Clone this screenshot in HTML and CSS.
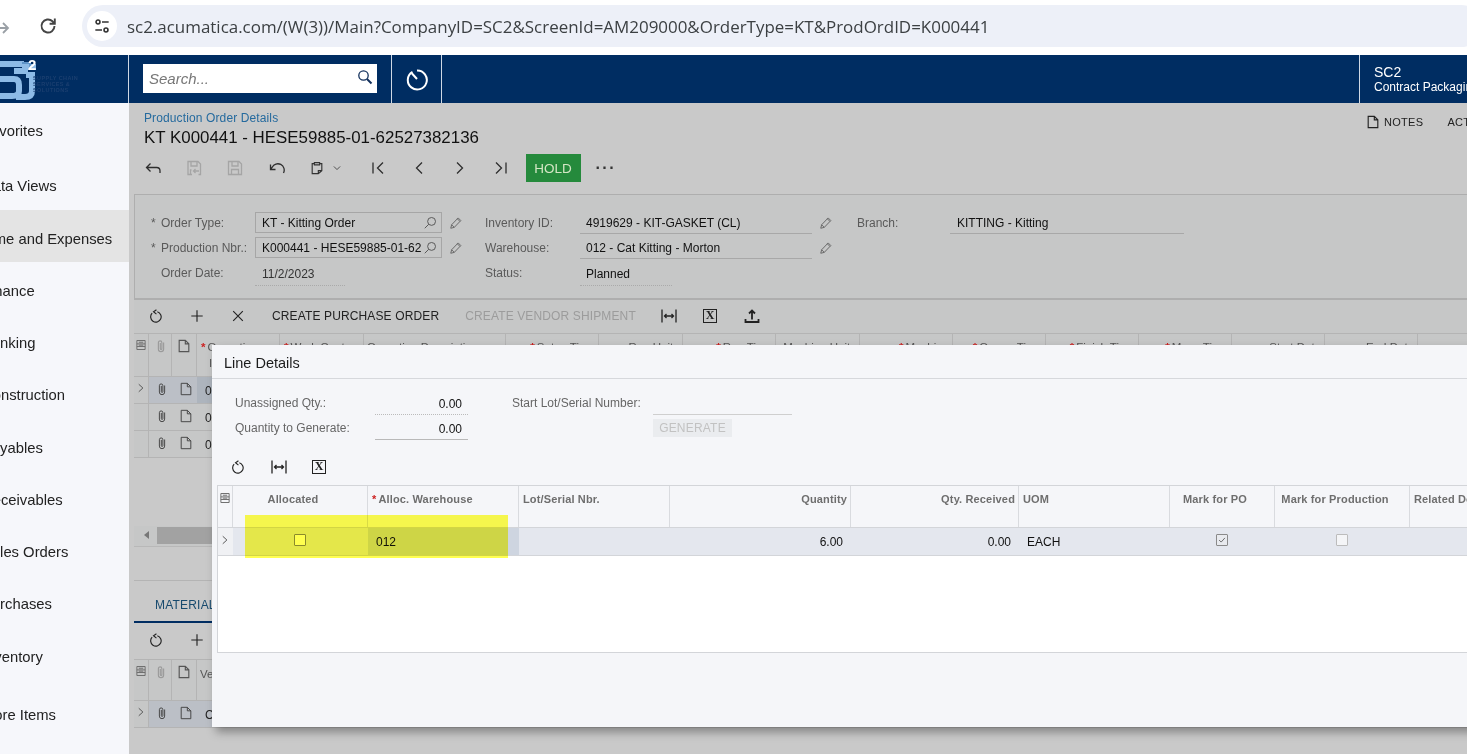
FILE: index.html
```html
<!DOCTYPE html>
<html lang="en">
<head>
<meta charset="utf-8">
<title>Production Order Details</title>
<link rel="stylesheet" href="styles.css">
</head>
<body>
<svg class="defs" xmlns="http://www.w3.org/2000/svg">
  <symbol id="i-back" viewBox="0 0 16 16"><path d="M15 13v-2.200A3.300 3.300 0 0 0 11.700 7.500H1.500M5.500 3.500l-4 4 4 4"/></symbol>
  <symbol id="i-savex" viewBox="0 0 16 16"><path d="M6 14.500H2V1.500h10l2.500 2.500v10.500h-2M5 1.500V6h6V1.500M4.500 14v-4h1M13 11H7.500M9.500 9l-2 2 2 2"/></symbol>
  <symbol id="i-save" viewBox="0 0 16 16"><path d="M1.500 1.500h10.500l2.500 2.500v10.500h-13zM5 1.500V6h6V1.500M4.500 14.500V9.500h7v5"/></symbol>
  <symbol id="i-undo" viewBox="0 0 16 16"><path d="M14.500 13A6 6 0 0 0 3.200 7.200L1.500 9.500M1.500 4.500v5h5"/></symbol>
  <symbol id="i-clip" viewBox="0 0 16 16"><path d="M5 3H2.500v11.500h7l4-3.500V3H11M5 1.800h6v2.700H5zM9.500 14.500V11h4"/></symbol>
  <symbol id="i-down" viewBox="0 0 16 16"><path d="M3 5.500l5 5 5-5"/></symbol>
  <symbol id="i-first" viewBox="0 0 16 16"><path d="M3 2.500v11M13 2.500L7.500 8l5.500 5.500"/></symbol>
  <symbol id="i-prev" viewBox="0 0 16 16"><path d="M11 2.500L5.500 8l5.500 5.500"/></symbol>
  <symbol id="i-next" viewBox="0 0 16 16"><path d="M5 2.500L10.500 8 5 13.500"/></symbol>
  <symbol id="i-last" viewBox="0 0 16 16"><path d="M13 2.500v11M3 2.500L8.500 8 3 13.500"/></symbol>
  <symbol id="i-refresh" viewBox="0 0 16 16"><path d="M9.500 3.200A6 6 0 1 1 3.600 4.800M8.500 0.800l-3.300 2.400 3.300 2.600" /></symbol>
  <symbol id="i-plus" viewBox="0 0 16 16"><path d="M8 1.500v13M1.500 8h13"/></symbol>
  <symbol id="i-x" viewBox="0 0 16 16"><path d="M2.500 2.500l11 11M13.500 2.500l-11 11"/></symbol>
  <symbol id="i-fit" viewBox="0 0 16 16"><path d="M1 1.500v13M15 1.500v13M3.500 8h9M5.500 6l-2 2 2 2M10.500 6l2 2-2 2"/></symbol>
  <symbol id="i-up" viewBox="0 0 16 16"><path d="M8 11.500V2.500M5 5.500l3-3 3 3M1.500 11v3h13v-3" stroke-width="1.800"/></symbol>
  <symbol id="i-attach" viewBox="0 0 16 16"><path d="M11 4v7.500a3 3 0 0 1-6 0V4.200a2 2 0 0 1 4 0V11a.9.9 0 0 1-1.800 0V4.500"/></symbol>
  <symbol id="i-doc" viewBox="0 0 16 16"><path d="M2.500 1.500h7l4 4v9h-11zM9.500 1.500v4h4"/></symbol>
  <symbol id="i-cols" viewBox="0 0 16 16"><path d="M2.500 2h11v12h-11zM2.500 6.500h11M2.500 10h11M5 4.300h6M5 8.200h6"/></symbol>
  <symbol id="i-pen" viewBox="0 0 16 16"><path d="M2 14l1-4 7.500-7.800 3 3L6 13zM3 10l3 3M9.500 3.200l3 3"/></symbol>
  <symbol id="i-find" viewBox="0 0 16 16"><circle cx="9.800" cy="6.200" r="4.500"/><path d="M6.500 9.500L2 14"/></symbol>
  <symbol id="i-search" viewBox="0 0 16 16"><circle cx="6.500" cy="6.500" r="4.700"/><path d="M10 10l4.500 4.500" stroke-width="2"/></symbol>
  <symbol id="i-row" viewBox="0 0 16 16"><path d="M5 3l5.500 5L5 13"/></symbol>
</svg>

<header class="browser">
  <svg class="b-forward" viewBox="0 0 16 16"><path d="M1 8h12M8 3l5 5-5 5"/></svg>
  <svg class="b-reload" viewBox="0 0 20 20"><path d="M16.500 10a6.500 6.500 0 1 1-2-4.700L16.500 7.500M16.800 2.500v5.200h-5.200"/></svg>
  <div class="b-pill">
    <span class="b-tune"><svg viewBox="0 0 18 18"><circle cx="4.500" cy="4.500" r="2.200"/><path d="M9 4.500h7.500M1.500 13.500H9"/><circle cx="13.500" cy="13.500" r="2.200"/></svg></span>
    <span class="b-url">sc2.acumatica.com/(W(3))/Main?CompanyID=SC2&amp;ScreenId=AM209000&amp;OrderType=KT&amp;ProdOrdID=K000441</span>
  </div>
</header>

<nav class="nav">
  <div class="logo">
    <svg viewBox="0 0 128 48" class="logo-svg">
      <path class="logo-g" d="M-4 9H24M-3 9V22M-6 24H14Q19 24 19 30V36Q19 41 12 41H-6"/>
      <path class="logo-g" d="M14 16H25V12H36M26 20H32V36Q32 42 25 42H16"/>
      <path class="logo-l" d="M22 8H30V14"/>
    </svg>
    <span class="logo-two">2</span>
    <span class="logo-txt">SUPPLY CHAIN<br>SERVICES &amp;<br>SOLUTIONS</span>
  </div>
  <div class="nav-search">
    <div class="search-box"><span class="search-ph">Search...</span><svg class="ic16 navy"><use href="#i-search"/></svg></div>
  </div>
  <div class="nav-timer">
    <svg viewBox="0 0 24 24" class="timer"><path d="M7.500 4.800a9.500 9.500 0 1 0 4.500-1.300M12 12L7 6.500"/></svg>
  </div>
  <div class="nav-fill"></div>
  <div class="nav-company"><span class="co-a">SC2</span><span class="co-b">Contract Packaging</span></div>
</nav>

<div class="app">
  <aside class="side">
    <div class="side-item it-a"><span>Favorites</span></div>
    <div class="side-item it-b"><span>Data Views</span></div>
    <div class="side-item on"><span>Time and Expenses</span></div>
    <div class="side-item"><span>Finance</span></div>
    <div class="side-item"><span>Banking</span></div>
    <div class="side-item"><span>Construction</span></div>
    <div class="side-item"><span>Payables</span></div>
    <div class="side-item"><span>Receivables</span></div>
    <div class="side-item"><span>Sales Orders</span></div>
    <div class="side-item"><span>Purchases</span></div>
    <div class="side-item"><span>Inventory</span></div>
    <div class="side-item it-z"><span>More Items</span></div>
  </aside>

  <main class="main">
    <section class="head">
      <div class="head-left">
        <div class="crumb">Production Order Details</div>
        <h1 class="title">KT K000441 - HESE59885-01-62527382136</h1>
        <div class="tools">
          <svg class="tool"><use href="#i-back"/></svg>
          <svg class="tool off"><use href="#i-savex"/></svg>
          <svg class="tool off"><use href="#i-save"/></svg>
          <svg class="tool"><use href="#i-undo"/></svg>
          <span class="tool-pair"><svg class="ic14"><use href="#i-clip"/></svg><svg class="ic10"><use href="#i-down"/></svg></span>
          <svg class="tool"><use href="#i-first"/></svg>
          <svg class="tool"><use href="#i-prev"/></svg>
          <svg class="tool"><use href="#i-next"/></svg>
          <svg class="tool"><use href="#i-last"/></svg>
          <span class="hold">HOLD</span>
          <span class="dots">&middot;&middot;&middot;</span>
        </div>
      </div>
      <div class="head-right">
        <svg class="ic14"><use href="#i-doc"/></svg><span class="act">NOTES</span><span class="act act2">ACTIONS</span>
      </div>
    </section>

    <section class="form">
      <div class="f-lab"><i>*</i>Order Type:</div>
      <div class="f-in"><span>KT - Kitting Order</span><svg class="ic14"><use href="#i-find"/></svg></div>
      <div class="f-pen"><svg class="ic14"><use href="#i-pen"/></svg></div>
      <div class="f-lab2">Inventory ID:</div>
      <div class="f-val">4919629 - KIT-GASKET (CL)</div>
      <div class="f-pen"><svg class="ic14"><use href="#i-pen"/></svg></div>
      <div class="f-lab2">Branch:</div>
      <div class="f-val f-br">KITTING - Kitting</div>

      <div class="f-lab"><i>*</i>Production Nbr.:</div>
      <div class="f-in"><span>K000441 - HESE59885-01-62</span><svg class="ic14"><use href="#i-find"/></svg></div>
      <div class="f-pen"><svg class="ic14"><use href="#i-pen"/></svg></div>
      <div class="f-lab2">Warehouse:</div>
      <div class="f-val">012 - Cat Kitting - Morton</div>
      <div class="f-pen"><svg class="ic14"><use href="#i-pen"/></svg></div>
      <div class="f-lab2"></div>
      <div></div>

      <div class="f-lab"><i></i>Order Date:</div>
      <div class="f-ro date">11/2/2023</div>
      <div></div>
      <div class="f-lab2">Status:</div>
      <div class="f-ro stat">Planned</div>
    </section>

    <section class="gt">
      <svg class="g-ic"><use href="#i-refresh"/></svg>
      <svg class="g-ic"><use href="#i-plus"/></svg>
      <svg class="g-ic"><use href="#i-x"/></svg>
      <span class="gt-btn">CREATE PURCHASE ORDER</span>
      <span class="gt-btn off">CREATE VENDOR SHIPMENT</span>
      <svg class="g-ic2"><use href="#i-fit"/></svg>
      <span class="excel">X</span>
      <svg class="g-ic2"><use href="#i-up"/></svg>
    </section>

    <section class="table">
      <div class="t-row t-head">
        <div class="c"><svg class="ic12 gray"><use href="#i-cols"/></svg></div>
        <div class="c"><svg class="ic14 lgray"><use href="#i-attach"/></svg></div>
        <div class="c"><svg class="ic14"><use href="#i-doc"/></svg></div>
        <div class="c"><b>*</b>Operation<br><span class="ind">ID</span></div>
        <div class="c"><b>*</b>Work Center</div>
        <div class="c">Operation Description</div>
        <div class="c r"><b>*</b>Setup Time</div>
        <div class="c r">Run Units</div>
        <div class="c r"><b>*</b>Run Time</div>
        <div class="c r">Machine Units</div>
        <div class="c r"><b>*</b>Machine</div>
        <div class="c r"><b>*</b>Queue Time</div>
        <div class="c r"><b>*</b>Finish Time</div>
        <div class="c r"><b>*</b>Move Time</div>
        <div class="c r">Start Date</div>
        <div class="c r">End Date</div>
      </div>
      <div class="t-row t-body sel">
        <div class="c0"><svg class="ic12"><use href="#i-row"/></svg></div>
        <div class="c1"><svg class="ic14"><use href="#i-attach"/></svg></div>
        <div class="c1"><svg class="ic14"><use href="#i-doc"/></svg></div>
        <div class="c2">0010</div>
      </div>
      <div class="t-row t-body">
        <div class="c0"></div>
        <div class="c1"><svg class="ic14"><use href="#i-attach"/></svg></div>
        <div class="c1"><svg class="ic14"><use href="#i-doc"/></svg></div>
        <div class="c2">0020</div>
      </div>
      <div class="t-row t-body">
        <div class="c0"></div>
        <div class="c1"><svg class="ic14"><use href="#i-attach"/></svg></div>
        <div class="c1"><svg class="ic14"><use href="#i-doc"/></svg></div>
        <div class="c2">0030</div>
      </div>
    </section>

    <div class="scroll"><span class="sc-arrow"></span><span class="sc-thumb"></span></div>

    <section class="tabs"><span class="tab">MATERIALS</span></section>
    <section class="gt2">
      <svg class="g-ic"><use href="#i-refresh"/></svg>
      <svg class="g-ic"><use href="#i-plus"/></svg>
    </section>
    <section class="table">
      <div class="t-row t-head t2">
        <div class="c"><svg class="ic12 gray"><use href="#i-cols"/></svg></div>
        <div class="c"><svg class="ic14 lgray"><use href="#i-attach"/></svg></div>
        <div class="c"><svg class="ic14"><use href="#i-doc"/></svg></div>
        <div class="c wt">Vendor</div>
      </div>
      <div class="t-row t-body sel s2">
        <div class="c0"><svg class="ic12"><use href="#i-row"/></svg></div>
        <div class="c1"><svg class="ic14"><use href="#i-attach"/></svg></div>
        <div class="c1"><svg class="ic14"><use href="#i-doc"/></svg></div>
        <div class="c2">CAT</div>
      </div>
    </section>
  </main>
</div>

<section class="modal">
  <div class="m-title">Line Details</div>
  <div class="m-form">
    <div class="m-lab">Unassigned Qty.:</div>
    <div class="m-num dotted">0.00</div>
    <div class="m-lab m-lab3">Start Lot/Serial Number:</div>
    <div class="m-line"></div>
    <div class="m-lab">Quantity to Generate:</div>
    <div class="m-num solid">0.00</div>
    <div></div>
    <div class="m-gen"><span>GENERATE</span></div>
  </div>
  <div class="m-tools">
    <svg class="m-ic"><use href="#i-refresh"/></svg>
    <svg class="m-ic"><use href="#i-fit"/></svg>
    <span class="excel m-ex">X</span>
  </div>
  <div class="m-grid">
    <div class="m-row m-head">
      <div class="h h-ic"><svg class="ic12 gray"><use href="#i-cols"/></svg></div>
      <div class="h ctr">Allocated</div>
      <div class="h"><b>*</b>Alloc. Warehouse</div>
      <div class="h">Lot/Serial Nbr.</div>
      <div class="h rgt">Quantity</div>
      <div class="h rgt">Qty. Received</div>
      <div class="h">UOM</div>
      <div class="h ctr">Mark for PO</div>
      <div class="h ctr">Mark for Production</div>
      <div class="h">Related Document</div>
    </div>
    <div class="m-row m-body">
      <div class="d d-ar"><svg class="ic12"><use href="#i-row"/></svg></div>
      <div class="d ctr"><span class="cb cb-y"></span></div>
      <div class="d d-sel">012</div>
      <div class="d"></div>
      <div class="d rgt">6.00</div>
      <div class="d rgt">0.00</div>
      <div class="d d-uom">EACH</div>
      <div class="d ctr"><span class="cb cb-on"><svg viewBox="0 0 12 12"><path d="M2.500 6l2.500 2.500 4.500-5"/></svg></span></div>
      <div class="d ctr"><span class="cb"></span></div>
      <div class="d"></div>
    </div>
  </div>
  <div class="mark"></div>
</section>
</body>
</html>
```

FILE: styles.css
```css
* { box-sizing: border-box; }
html, body { margin: 0; padding: 0; }
body {
  width: 1467px; height: 754px; overflow: hidden; position: relative;
  font-family: "Liberation Sans", Arial, sans-serif; font-size: 12px; color: #111; background: #fff;
}
svg { fill: none; stroke: currentColor; stroke-width: 1.300; flex: none; display: block; }
.defs { position: absolute; width: 0; height: 0; }
.ic16 { width: 16px; height: 16px; }
.ic14 { width: 14px; height: 14px; }
.ic12 { width: 12px; height: 12px; }
.ic10 { width: 10px; height: 10px; }
.navy { color: #12305c; }
.gray { color: #6d6d6d; }
.lgray { color: #9a9a9a; }

/* browser */
.browser { height: 55px; display: flex; align-items: center; background: #fff; position: relative; }
.b-forward { width: 16px; height: 16px; margin-left: -5px; color: #9aa0a6; stroke-width: 1.800; }
.b-reload { width: 20px; height: 20px; margin-left: 27px; margin-top: -3px; color: #444; stroke-width: 1.900; }
.b-pill {
  margin-left: 24px; height: 42px; width: 1400px; border-radius: 21px; background: #edf0f8;
  display: flex; align-items: center; padding-left: 5px; flex: none; margin-top: -3px;
}
.b-tune { width: 30px; height: 30px; border-radius: 50%; background: #fff; display: flex; align-items: center; justify-content: center; color: #333; }
.b-tune svg { width: 16px; height: 16px; stroke-width: 1.800; }
.b-url { margin-left: 10px; font-family: "Open Sans", sans-serif; font-size: 16.940px; color: #3c4043; white-space: nowrap; }

/* nav */
.nav { height: 48px; background: #002d62; display: flex; color: #fff; }
.logo { width: 129px; border-right: 1px solid #cfd8e4; position: relative; overflow: hidden; flex: none; }
.logo-svg { width: 128px; height: 48px; }
.logo-g { stroke: #8dbbe6; stroke-width: 6; }
.logo-l { stroke: #5e94c8; stroke-width: 2; }
.logo-two { position: absolute; left: 28px; top: 1px; font-size: 15px; font-weight: 700; color: #fff; }
.logo-txt { position: absolute; left: 33px; top: 20px; font-size: 5.500px; line-height: 6px; font-weight: 700; letter-spacing: .4px; color: #1a3f70; white-space: nowrap; }
.nav-search { width: 263px; padding: 9px 0 0 14px; border-right: 1px solid #cfd8e4; flex: none; }
.search-box { width: 234px; height: 29px; background: #fff; display: flex; align-items: center; justify-content: space-between; padding: 0 4px 0 6px; }
.search-box svg { margin-top: -3px; }
.search-ph { color: #777; font-style: italic; font-size: 15px; }
.nav-timer { width: 50px; border-right: 1px solid #cfd8e4; display: flex; align-items: center; justify-content: center; flex: none; }
.timer { width: 24px; height: 24px; color: #fff; stroke-width: 2; }
.nav-fill { width: 918px; border-right: 1px solid #cfd8e4; flex: none; }
.nav-company { padding: 9px 0 0 14px; display: flex; flex-direction: column; white-space: nowrap; flex: none; width: 200px; }
.co-a { font-size: 14px; line-height: 16px; }
.co-b { font-size: 12px; line-height: 14px; }

/* app */
.app { display: flex; height: 651px; }
.side { width: 129px; background: #f6f7fb; overflow: hidden; flex: none; padding-top: 1px; }
.side-item { height: 52.250px; display: flex; align-items: center; padding-top: 5px; font-size: 14.800px; color: #222; white-space: nowrap; }
.side-item span { margin-left: -18px; }
.it-a { height: 53px; padding-top: 0; }
.it-b { height: 53px; padding-top: 4px; }
.it-z { height: 64px; }
.on { background: #e4e4e4; }

.main { width: 1338px; background: #c9c9c9; overflow: hidden; flex: none; position: relative; }
.head { height: 91px; display: flex; padding-left: 15px; }
.head-left { width: 1222px; flex: none; }
.crumb { color: #256a9e; font-size: 12px; letter-spacing: .12px; line-height: 14px; margin-top: 8px; }
.title { margin: 3px 0 0; font-weight: 400; font-size: 16.900px; line-height: 20px; color: #111; white-space: nowrap; }
.tools { display: flex; align-items: center; height: 28px; margin-top: 6px; padding-left: 1px; color: #333; }
.tool { width: 16px; height: 16px; margin-right: 25.200px; color: #2e2e2e; }
.tool.off { color: #a5a5a5; }
.tool-pair { display: flex; align-items: center; gap: 8px; width: 60px; }
.hold { width: 55px; height: 28px; background: #258a3c; color: #d3e6c4; display: flex; align-items: center; justify-content: center; font-size: 13.500px; margin-left: -9px; flex: none; }
.dots { margin-left: 15px; font-size: 16px; font-weight: 700; letter-spacing: 1.500px; line-height: 20px; color: #333; }
.head-right { display: flex; align-items: center; height: 14px; margin-top: 12px; flex: none; white-space: nowrap; color: #222; }
.act { font-size: 11px; letter-spacing: .3px; margin-left: 4px; }
.act2 { margin-left: 24px; }

/* form */
.form {
  margin-left: 5px; height: 106px; background: #c6c7c7; border: 1px solid #aeaeae; border-width: 1px 0 2px 1px;
  padding: 15px 0 0 16px;
  display: grid; grid-template-columns: 104px 187px 43px 95px 232px 45px 93px 234px; grid-auto-rows: 25px;
  align-items: center; color: #555;
}
.f-lab i { display: inline-block; width: 10px; font-style: normal; }
.f-lab, .f-lab2 { color: #5a5a5a; white-space: nowrap; }
.f-in { height: 21px; width: 187px; border: 1px solid #a6a6a6; display: flex; align-items: center; justify-content: space-between; padding: 0 4px 0 6px; color: #111; white-space: nowrap; overflow: hidden; }
.f-in span { overflow: hidden; width: 160px; }
.f-in svg { color: #555; stroke-width: 1.100; }
.f-pen { padding-left: 7px; color: #666; }
.f-pen svg { stroke-width: 1.100; }
.f-val { height: 22px; line-height: 23px; padding-left: 6px; border-bottom: 1px solid #a8a8a8; color: #111; margin-top: 1px; }
.f-br { padding-left: 7px; }
.f-ro { height: 24px; line-height: 24px; border-bottom: 1px dotted #aaa; margin-top: 2px; padding-left: 7px; }
.date { width: 90px; color: #333; }
.stat { width: 92px; padding-left: 6px; color: #111; }

/* grid toolbar */
.gt { margin-left: 5px; height: 34px; background: #c6c7c7; border-bottom: 1px solid #b4b4b4; display: flex; align-items: center; padding: 0 0 2px 15px; color: #222; }
.g-ic { width: 14px; height: 14px; margin-right: 27px; }
.gt-btn { font-size: 12px; letter-spacing: .13px; white-space: nowrap; margin-left: 0; }
.gt-btn.off { color: #9c9c9c; margin-left: 26px; width: 171px; }
.gt-btn.off + .g-ic2 { margin-left: 25px; }
.g-ic2 { width: 16px; height: 16px; margin-right: 26px; }
.excel {
  width: 14px; height: 14px; border: 1.500px solid #222; font-family: "Liberation Serif", serif; font-weight: 700; font-size: 12px;
  line-height: 11px; text-align: center; margin-right: 27px; display: block; flex: none;
}

/* tables */
.table { margin-left: 5px; }
.t-row { display: grid; grid-template-columns: 15px 23px 25px 83px 84px 142px 93px 84px 93px 84px 93px 93px 93px 93px 93px 93px; white-space: nowrap; }
.t-head { height: 43px; background: #c6c7c7; border-bottom: 1px solid #b4b4b4; color: #555; font-size: 11.500px; }
.t-head.t2 { height: 42px; grid-template-columns: 15px 23px 25px 83px; border-top: 1px solid #b4b4b4; }
.t-head .c { border-right: 1px solid #b4b4b4; padding: 5px 3px; overflow: hidden; line-height: 16px; }
.t-head .c:nth-child(2) { padding-left: 5px; }
.t-head .c:nth-child(3) { padding-left: 5px; }
.t-head .c.r { text-align: right; }
.t-head .wt { padding-left: 3px; border: 0; padding-top: 6px; }
.t-head b { color: #c22; margin-right: 2px; margin-left: 1px; }
.t-head .ind { margin-left: 9px; }
.t-head .c svg { margin-top: 0; }
.t-head .c:first-child svg { margin-left: -2px; }
.t-body { height: 27px; background: #c6c7c7; border-bottom: 1px solid #b4b4b4; align-items: stretch; }
.c0 { display: flex; align-items: center; justify-content: center; color: #555; border-right: 1px solid #b4b4b4; padding-bottom: 4px; }
.c1 { display: flex; align-items: center; justify-content: center; padding: 0 0 3px 3px; color: #444; }
.c1 svg { stroke-width: 1.100; }
.c2 { padding: 7px 0 0 8px; color: #222; font-size: 12px; }
.sel .c1 { background: #bbbfc6; }
.sel .c2 { background: #adb4bd; }
.s2 .c2 { background: #bbbfc6; }
.s2 { background: #c6c7c7; }

.scroll { margin: 68px 0 0 5px; height: 21px; display: flex; align-items: center; background: #c6c7c7; border-bottom: 1px solid #b8b8b8; padding-bottom: 2px; }
.sc-arrow { width: 0; height: 0; border: 4px solid transparent; border-right: 5px solid #777; margin-left: 6px; flex: none; }
.sc-thumb { width: 100px; height: 17px; background: #a2a2a2; margin-left: 8px; }

.tabs { margin: 33px 0 0 5px; border-top: 1px solid #b4b4b4; height: 43px; border-bottom: 2px solid #002d62; display: flex; align-items: center; padding: 8px 0 0 21px; }
.tab { font-size: 12px; color: #174a6e; letter-spacing: .2px; }
.gt2 { margin-left: 5px; height: 36px; padding: 10px 0 0 15px; display: flex; color: #222; }

/* modal */
.modal {
  position: absolute; left: 212px; top: 345px; width: 1400px; height: 382px; background: #f5f6f9;
  box-shadow: 4px 5px 9px rgba(0,0,0,.35); color: #222;
}
.m-title { height: 34px; border-bottom: 1px solid #d6d8dc; padding: 0 0 0 12px; font-size: 14.500px; line-height: 36px; color: #1c1c1c; }
.m-form {
  display: grid; grid-template-columns: 140px 93px 185px 139px; grid-auto-rows: 25px; padding: 11px 0 0 23px; align-items: center; font-size: 12px; color: #666;
}
.m-lab { color: #666; white-space: nowrap; }
.m-lab3 { padding-left: 44px; }
.m-num { height: 22px; line-height: 22px; text-align: right; padding-right: 6px; color: #111; margin-top: 3px; }
.dotted { border-bottom: 1px dotted #bbb; }
.solid { border-bottom: 1px solid #b9b9b9; }
.m-line { height: 22px; margin-top: 3px; border-bottom: 1px solid #cfcfcf; }
.m-gen { align-self: start; margin-top: 4px; }
.m-gen span { display: block; width: 79px; height: 18px; line-height: 18px; text-align: center; background: #eaecef; color: #c2c2c2; letter-spacing: .2px; }
.m-tools { display: flex; align-items: center; padding-left: 19px; height: 33px; margin-top: 10px; color: #222; }
.m-ic { width: 14px; height: 14px; margin-right: 26px; }
.m-tools .m-ic + .m-ic { width: 16px; height: 16px; margin-left: 0; margin-right: 26px; }
.m-ex { margin-right: 0; margin-left: -1px; }
.m-grid { margin: 2px 0 0 5px; height: 168px; background: #fff; border: 1px solid #d3d5d9; border-right: 0; }
.m-row { display: grid; grid-template-columns: 15px 135px 151px 151px 181px 168px 151px 105px 135px 200px; white-space: nowrap; }
.m-head { height: 42px; background: #f5f6f9; border-bottom: 1px solid #d3d5d9; color: #6e6e6e; font-size: 11px; font-weight: 700; letter-spacing: .15px; }
.h { border-right: 1px solid #d9dbdf; padding: 7px 3px 0 4px; overflow: hidden; }
.h.ctr { padding-right: 18px; }
.h-ic { padding: 0 0 0 1px; }
.h-ic svg { margin-top: 6px; }
.h b { color: #c22; margin-right: 2px; }
.ctr { text-align: center; }
.rgt { text-align: right; }
.m-body { height: 28px; background: #e4e7ee; border-bottom: 1px solid #d3d5d9; align-items: stretch; color: #111; }
.d { padding-top: 7px; position: relative; }
.d.ctr { padding-right: 2px; }
.d.rgt { padding-right: 8px; }
.d-ar { padding: 6px 0 0 1px; color: #555; background: #f0f1f4; }
.d-sel { background: #ced5e0; padding-left: 8px; }
.d-uom { padding-left: 8px; }
.cb { display: inline-block; width: 12px; height: 12px; border: 1px solid #bcbcbc; background: #f4f5f7; vertical-align: top; margin-top: -1px; border-radius: 1px; }
.cb-on { border-color: #8a8a8a; background: #e8eaee; color: #555; }
.cb-on svg { width: 10px; height: 10px; stroke-width: 1; }
.cb-y { border-color: #8a8a8a; background: #fff; }
.mark { position: absolute; left: 33px; top: 170px; width: 263px; height: 43px; background: #ffff4f; mix-blend-mode: multiply; }
```
